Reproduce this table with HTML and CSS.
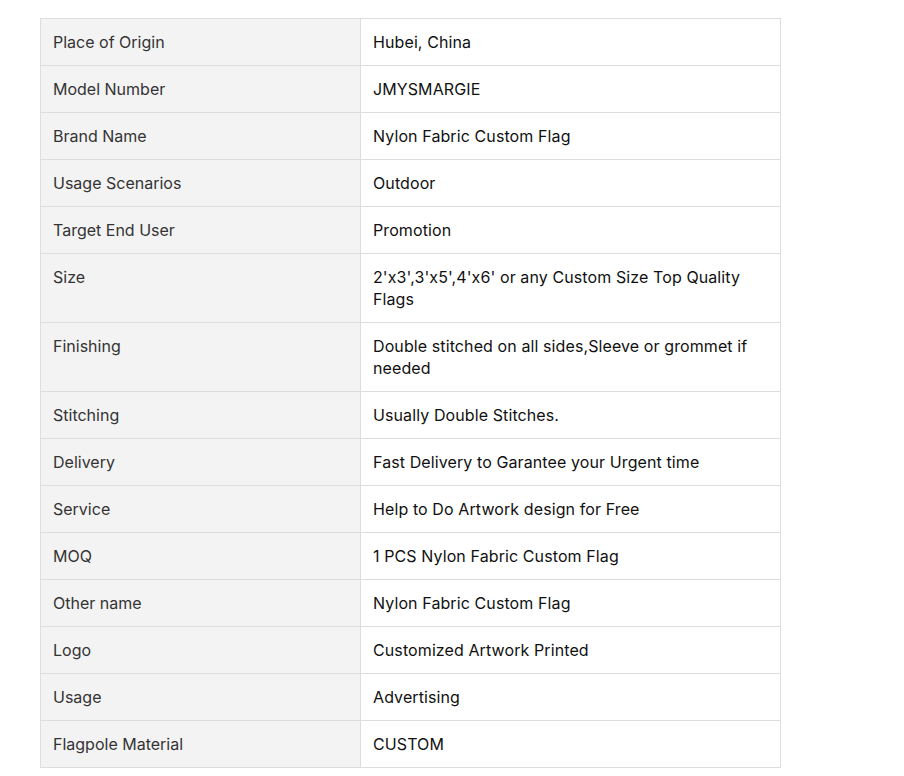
FILE: index.html
```html
<!DOCTYPE html>
<html>
<head>
<meta charset="utf-8">
<link rel="stylesheet" href="styles.css">
</head>
<body>
<div class="wrap">
<table class="spec">
<tbody>
<tr><td class="k">Place of Origin</td><td class="v">Hubei, China</td></tr>
<tr><td class="k">Model Number</td><td class="v">JMYSMARGIE</td></tr>
<tr><td class="k">Brand Name</td><td class="v">Nylon Fabric Custom Flag</td></tr>
<tr><td class="k">Usage Scenarios</td><td class="v">Outdoor</td></tr>
<tr><td class="k">Target End User</td><td class="v">Promotion</td></tr>
<tr><td class="k">Size</td><td class="v">2'x3',3'x5',4'x6' or any Custom Size Top Quality Flags</td></tr>
<tr><td class="k">Finishing</td><td class="v">Double stitched on all sides,Sleeve or grommet if needed</td></tr>
<tr><td class="k">Stitching</td><td class="v">Usually Double Stitches.</td></tr>
<tr><td class="k">Delivery</td><td class="v">Fast Delivery to Garantee your Urgent time</td></tr>
<tr><td class="k">Service</td><td class="v">Help to Do Artwork design for Free</td></tr>
<tr><td class="k">MOQ</td><td class="v">1 PCS Nylon Fabric Custom Flag</td></tr>
<tr><td class="k">Other name</td><td class="v">Nylon Fabric Custom Flag</td></tr>
<tr><td class="k">Logo</td><td class="v">Customized Artwork Printed</td></tr>
<tr><td class="k">Usage</td><td class="v">Advertising</td></tr>
<tr><td class="k">Flagpole Material</td><td class="v">CUSTOM</td></tr>
</tbody>
</table>
</div>
</body>
</html>
```
FILE: styles.css
```css
html, body {
  margin: 0;
  padding: 0;
  background: #fff;
}
.wrap {
  padding: 18px 0 0 40px;
}
.spec {
  border-collapse: collapse;
  width: 741px;
  table-layout: fixed;
  font-family: Inter, "Liberation Sans", sans-serif;
  font-size: 16px;
  line-height: 22px;
}
.spec td {
  border: 1px solid #dddddd;
  padding: 12px 12px;
  vertical-align: top;
  text-align: left;
}
.spec .k {
  width: 295px;
  background: #f3f3f3;
  color: #333333;
}
.spec .v {
  background: #fff;
  color: #111111;
  font-weight: 400;
  letter-spacing: 0.1px;
}
```
